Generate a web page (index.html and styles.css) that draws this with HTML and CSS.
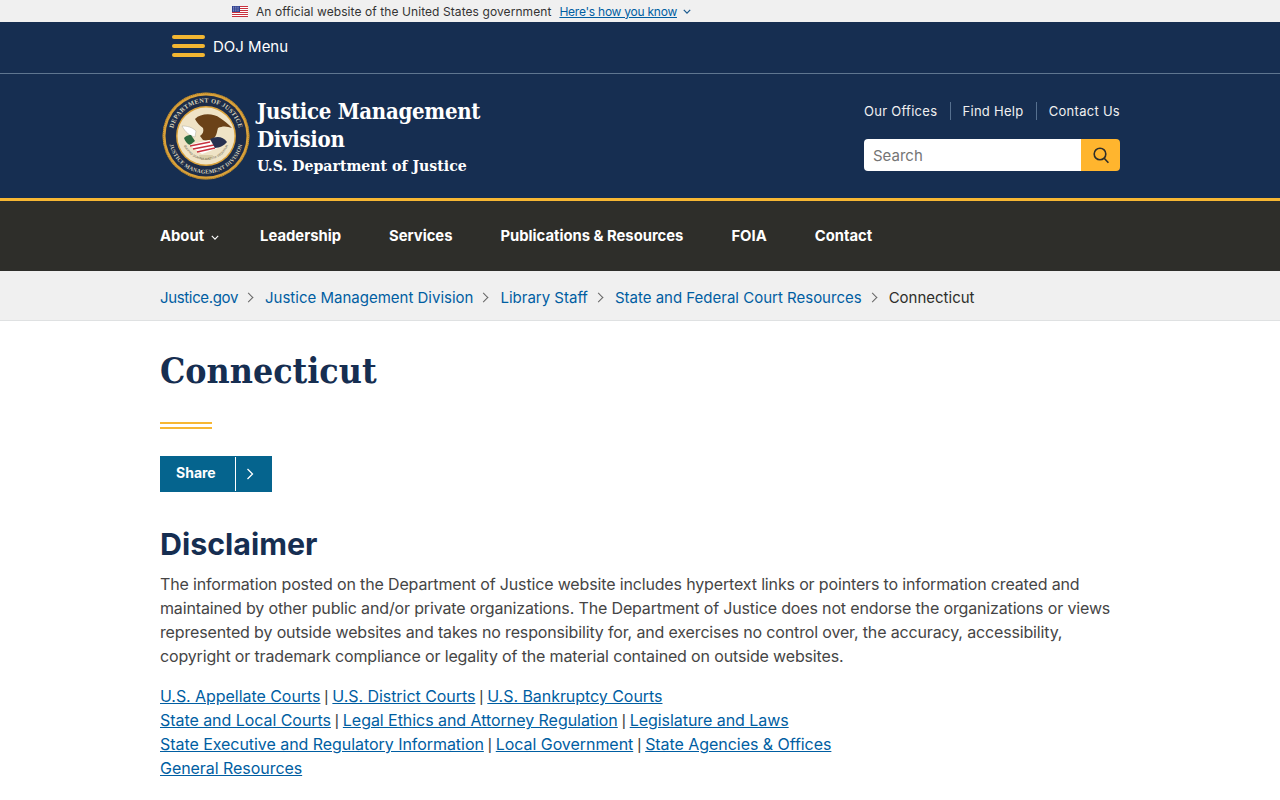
FILE: index.html
```html
<!DOCTYPE html>
<html lang="en">
<head>
    <meta charset="UTF-8">
    <meta name="viewport" content="width=device-width, initial-scale=1.0">
    <title>Connecticut | Justice Management Division</title>
    <link rel="stylesheet" href="styles.css">
</head>
<body>
    <div class="gov-banner">
        <svg class="flag" viewBox="0 0 16 11" width="16" height="11">
            <rect width="16" height="11" fill="#fff"/>
            <path d="M0 .5h16M0 2.5h16M0 4.5h16M0 6.5h16M0 8.5h16M0 10.5h16" stroke="#c8313e" stroke-width="1"/>
            <rect width="8" height="6" fill="#2e3f8f"/>
            <path d="M1 1.2h6M1 3h6M1 4.8h6" stroke="#cfd3ea" stroke-width=".7" stroke-dasharray="1 .8"/>
        </svg>
        <span class="gov-text">An official website of the United States government</span>
        <a class="gov-link" href="#">Here's how you know</a>
        <svg class="gov-caret" viewBox="0 0 10 6" width="8" height="5"><path d="M1 1l4 4 4-4" fill="none" stroke="#1b5a8e" stroke-width="1.6"/></svg>
    </div>

    <div class="doj-bar">
        <div class="doj-menu">
            <span class="burger"><i></i><i></i><i></i></span>
            <span>DOJ Menu</span>
        </div>
    </div>

    <header class="site-header">
        <div class="wrap header-row">
            <div class="brand">
                <svg class="seal" viewBox="0 0 88 88" width="88" height="88">
                    <defs>
                        <path id="ring-top" d="M10.500 44a33.500 33.500 0 0 1 67 0"/>
                        <path id="ring-bottom" d="M6.500 44a37.500 37.500 0 0 0 75 0"/>
                        <path id="motto" d="M20 44a24 24 0 0 0 48 0"/>
                    </defs>
                    <circle cx="44" cy="44" r="43.500" fill="#d9a13a"/>
                    <circle cx="44" cy="44" r="43" fill="none" stroke="#8a6420" stroke-width="1" stroke-dasharray="1 1"/>
                    <circle cx="44" cy="44" r="40.500" fill="#1d2c48"/>
                    <text class="seal-ring"><textPath href="#ring-top" startOffset="50%" text-anchor="middle">DEPARTMENT OF JUSTICE</textPath></text>
                    <text class="seal-ring seal-ring-low"><textPath href="#ring-bottom" startOffset="50%" text-anchor="middle">JUSTICE MANAGEMENT DIVISION</textPath></text>
                    <circle cx="44" cy="44" r="30" fill="#d9a13a"/>
                    <circle cx="44" cy="44" r="28.500" fill="#efe3c6"/>
                    <path d="M33 27c6-6 18-6 25-1 5 3 9 7 12 10-5-2-10-2-14 0-1 3-1 6-3 9-3 3-8 4-12 3l-3-4c3-2 4-5 3-8-3-2-6-5-8-9z" fill="#6b4218"/>
                    <path d="M20 34c5 0 10 1 14 5l-1 6c-5-1-10-5-13-11z" fill="#fff" stroke="#9a9a8a" stroke-width=".4"/>
                    <path d="M22 46c3-3 5-3 7-3l4 6-5 4c-3-1-5-4-6-7z" fill="#2c6a3e"/>
                    <path d="M27 53l20-5 9 8-16 6z" fill="#fff"/>
                    <path d="M28 54l20-4M31 57l21-4M35 60l18-4" stroke="#c8313e" stroke-width="1.400"/>
                    <path d="M48 47c6-3 13-3 17 3-2 3-8 6-12 6z" fill="#27304f"/>
                    <path d="M37 63h14l-2 5h-10z" fill="#d9cda8"/>
                    <text class="seal-motto"><textPath href="#motto" startOffset="50%" text-anchor="middle">QUI PRO DOMINA JUSTITIA SEQUITUR</textPath></text>
                </svg>
                <div class="brand-text">
                    <div class="brand-title">Justice Management Division</div>
                    <div class="brand-sub">U.S. Department of Justice</div>
                </div>
            </div>
            <div class="header-tools">
                <ul class="util-links">
                    <li><a href="#">Our Offices</a></li>
                    <li><a href="#">Find Help</a></li>
                    <li><a href="#">Contact Us</a></li>
                </ul>
                <form class="search">
                    <input class="search-input" type="text" placeholder="Search">
                    <button class="search-btn" type="button" aria-label="Search">
                        <svg viewBox="0 0 18 18" width="18" height="18"><circle cx="8" cy="8" r="5.800" fill="none" stroke="#2e2e2a" stroke-width="1.600"/><path d="M12.200 12.200l4.200 4.600" stroke="#2e2e2a" stroke-width="1.600" fill="none"/></svg>
                    </button>
                </form>
            </div>
        </div>
    </header>

    <nav class="main-nav">
        <ul class="wrap nav-list">
            <li><a href="#">About</a><svg class="nav-caret" viewBox="0 0 10 6" width="8" height="5"><path d="M1 1l4 4 4-4" fill="none" stroke="#fff" stroke-width="1.400"/></svg></li>
            <li><a href="#">Leadership</a></li>
            <li><a href="#">Services</a></li>
            <li><a href="#">Publications &amp; Resources</a></li>
            <li><a href="#">FOIA</a></li>
            <li><a href="#">Contact</a></li>
        </ul>
    </nav>

    <div class="crumbs">
        <ol class="wrap crumb-list">
            <li><a href="#">Justice.gov</a></li>
            <li><a href="#">Justice Management Division</a></li>
            <li><a href="#">Library Staff</a></li>
            <li><a href="#">State and Federal Court Resources</a></li>
            <li>Connecticut</li>
        </ol>
    </div>

    <main class="wrap content">
        <h1>Connecticut</h1>
        <div class="rule"></div>
        <a class="share" href="#">
            <span class="share-label">Share</span>
            <span class="share-arrow"><svg viewBox="0 0 8 12" width="8" height="12"><path d="M1.500 1l5 5-5 5" fill="none" stroke="#fff" stroke-width="1.300"/></svg></span>
        </a>
        <h2>Disclaimer</h2>
        <p class="intro">The information posted on the Department of Justice website includes hypertext links or pointers to information created and maintained by other public and/or private organizations. The Department of Justice does not endorse the organizations or views represented by outside websites and takes no responsibility for, and exercises no control over, the accuracy, accessibility, copyright or trademark compliance or legality of the material contained on outside websites.</p>
        <p class="link-list">
            <a href="#">U.S. Appellate Courts</a><span class="sep"> | </span><a href="#">U.S. District Courts</a><span class="sep"> | </span><a href="#">U.S. Bankruptcy Courts</a><br>
            <a href="#">State and Local Courts</a><span class="sep"> | </span><a href="#">Legal Ethics and Attorney Regulation</a><span class="sep"> | </span><a href="#">Legislature and Laws</a><br>
            <a href="#">State Executive and Regulatory Information</a><span class="sep"> | </span><a href="#">Local Government</a><span class="sep"> | </span><a href="#">State Agencies &amp; Offices</a><br>
            <a href="#">General Resources</a>
        </p>
    </main>
</body>
</html>
```

FILE: styles.css
```css
* {
    box-sizing: border-box;
}
body {
    margin: 0;
    font-family: "Inter", "Liberation Sans", sans-serif;
    background-color: #fff;
    color: #454545;
    overflow-x: hidden;
}
ul, ol {
    list-style: none;
    margin: 0;
    padding: 0;
}
.wrap {
    width: 960px;
    margin: 0 auto;
}

/* top banner */
.gov-banner {
    height: 22px;
    background-color: #f0f0f0;
    display: flex;
    align-items: center;
    padding-left: 232px;
    font-size: 12px;
}
.flag {
    margin-right: 8px;
}
.gov-text {
    color: #333;
    letter-spacing: 0.08px;
}
.gov-link {
    margin-left: 8px;
    color: #005ea2;
    letter-spacing: -0.25px;
}
.gov-caret {
    margin-left: 6px;
}

/* doj menu */
.doj-bar {
    height: 52px;
    background-color: #162e51;
    border-bottom: 1px solid #5f7690;
    display: flex;
    align-items: center;
    padding: 0 0 3px 172px;
}
.doj-menu {
    display: flex;
    align-items: center;
    gap: 8px;
    color: #fff;
    font-size: 15px;
}
.burger {
    display: flex;
    flex-direction: column;
    gap: 5px;
    width: 33px;
}
.burger i {
    display: block;
    height: 4px;
    border-radius: 2px;
    background-color: #f2b632;
}

/* header */
.site-header {
    height: 124px;
    background-color: #162e51;
}
.header-row {
    height: 124px;
    display: flex;
    justify-content: space-between;
}
.brand {
    display: flex;
    align-items: flex-start;
    padding: 18px 0 0 2px;
}
.seal {
    flex-shrink: 0;
}
.seal-ring {
    font-family: "Liberation Serif", serif;
    font-size: 6.4px;
    font-weight: 700;
    letter-spacing: 0.3px;
    fill: #d8d3bd;
}
.seal-ring-low {
    font-size: 5.6px;
    letter-spacing: 0.2px;
}
.seal-motto {
    font-family: "Liberation Sans", sans-serif;
    font-size: 3px;
    fill: #5c5540;
}
.brand-text {
    margin-left: 7px;
    width: 240px;
    padding-top: 5px;
    color: #fff;
    font-family: "DejaVu Serif Condensed", "DejaVu Serif", serif;
    font-weight: 700;
}
.brand-title {
    font-size: 22px;
    line-height: 28px;
    letter-spacing: -0.3px;
}
.brand-sub {
    font-size: 15.7px;
    line-height: 26px;
    white-space: nowrap;
}
.header-tools {
    width: 256px;
    padding-top: 28px;
}
.util-links {
    display: flex;
    justify-content: space-between;
    font-size: 13px;
    line-height: 18px;
    letter-spacing: 0.28px;
}
.util-links li + li {
    border-left: 1px solid #56708f;
    padding-left: 12px;
}
.util-links a {
    color: #f0f0f0;
    text-decoration: none;
}
.search {
    display: flex;
    height: 32px;
    margin-top: 19px;
}
.search-input {
    flex: 1;
    min-width: 0;
    border: 0;
    border-radius: 4px 0 0 4px;
    padding: 0 9px;
    font-family: inherit;
    font-size: 15px;
}
.search-input::placeholder {
    color: #757575;
}
.search-btn {
    width: 39px;
    border: 0;
    padding: 0;
    border-radius: 0 4px 4px 0;
    background-color: #ffb52e;
    display: flex;
    align-items: center;
    justify-content: center;
}

/* main nav */
.main-nav {
    height: 73px;
    background-color: #2e2e2a;
    border-top: 3px solid #f7b733;
}
.nav-list {
    display: flex;
    gap: 48px;
    height: 69px;
    align-items: center;
    font-size: 14.8px;
    font-weight: 700;
}
.nav-list li {
    display: flex;
    align-items: center;
}
.nav-list a {
    color: #fff;
    text-decoration: none;
}
.nav-caret {
    margin: 4px -7px 0 7px;
}

/* breadcrumb */
.crumbs {
    height: 50px;
    background-color: #f0f0f0;
    border-bottom: 1px solid #dfe1e2;
}
.crumb-list {
    display: flex;
    align-items: center;
    height: 49px;
    padding-top: 4px;
    font-size: 15px;
    color: #2e2e2a;
}
.crumb-list li:first-child {
    letter-spacing: -0.35px;
}
.crumb-list li + li::before {
    content: "";
    display: inline-block;
    width: 6px;
    height: 6px;
    margin: 0 13px 2px 7px;
    border-top: 1.4px solid #666;
    border-right: 1.4px solid #666;
    transform: rotate(45deg);
}
.crumb-list a {
    color: #005ea2;
    text-decoration: none;
}

/* content */
.content {
    padding-top: 28px;
}
h1 {
    margin: 0;
    font-family: "DejaVu Serif Condensed", "DejaVu Serif", serif;
    font-size: 35.4px;
    line-height: 44px;
    font-weight: 700;
    color: #162e51;
}
.rule {
    width: 52px;
    height: 7px;
    margin-top: 29px;
    border-top: 2px solid #f7b733;
    border-bottom: 2px solid #f7b733;
}
.share {
    display: flex;
    width: 112px;
    height: 36px;
    margin-top: 27px;
    background-color: #05648e;
    color: #fff;
    font-size: 14px;
    font-weight: 700;
    text-decoration: none;
    align-items: center;
}
.share-label {
    width: 75px;
    padding: 0 0 3px 16px;
}
.share-arrow {
    height: 34px;
    flex: 1;
    border-left: 1px solid #fff;
    display: flex;
    align-items: center;
    padding-left: 10px;
}
h2 {
    margin: 32px 0 0;
    font-size: 30.4px;
    line-height: 40px;
    font-weight: 700;
    color: #162e51;
}
p {
    margin: 0 0 16px;
    font-size: 16px;
    line-height: 24px;
}
.intro {
    margin-top: 8px;
    letter-spacing: -0.15px;
}
.link-list {
    letter-spacing: -0.05px;
}
.sep {
    font-family: "Liberation Sans", sans-serif;
    line-height: 1;
    word-spacing: -0.5px;
}
p a {
    color: #005ea2;
}
```
